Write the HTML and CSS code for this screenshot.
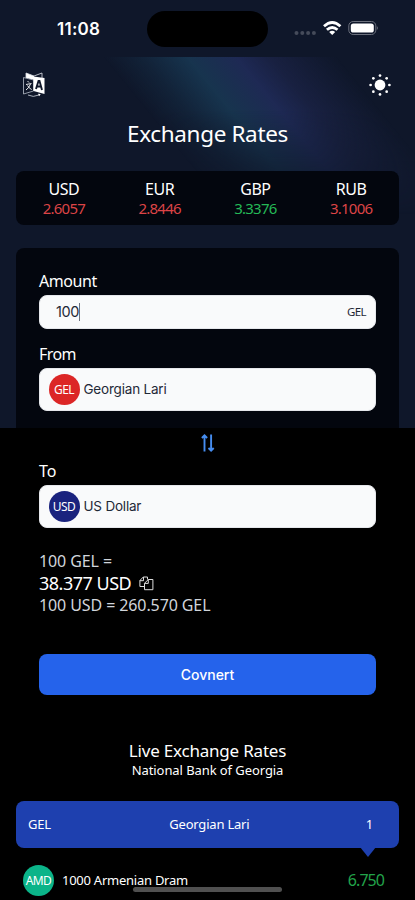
FILE: index.html
```html
<!DOCTYPE html>
<html lang="en">
<head>
<meta charset="utf-8">
<meta name="viewport" content="width=device-width, initial-scale=1">
<title>Exchange Rates</title>
<link rel="stylesheet" href="styles.css">
</head>
<body>
<div class="screen">
  <div class="glow"></div>
  <div class="statusbar">
    <div class="clock">11:08</div>
    <div class="island"></div>
    <div class="signals">
      <svg width="84" height="18" viewBox="0 0 84 18">
        <g fill="#454b5a"><circle cx="2.500" cy="13" r="2"/><circle cx="8.300" cy="13" r="2"/><circle cx="14.100" cy="13" r="2"/><circle cx="19.900" cy="13" r="2"/></g>
        <g fill="none" stroke="#fff" stroke-width="2.800"><path d="M30 6.300Q38.200 -1.300 46.400 6.300"/><path d="M32.900 9.800Q38.200 5.100 43.500 9.800"/></g>
        <path d="M35.200 12Q38.200 9.600 41.200 12L38.200 15Z" fill="#fff"/>
        <rect x="54.800" y="1.500" width="27" height="13" rx="4.300" fill="none" stroke="#6b707d"/>
        <rect x="56.800" y="3.500" width="23" height="9" rx="2.600" fill="#fff"/>
        <path d="M82.900 6Q84.600 8 82.900 10Z" fill="#777c88"/>
      </svg>
    </div>
  </div>
  <header class="toolbar">
    <svg class="translate" width="22" height="26" viewBox="0 0 22 26">
      <path d="M3 1L11 4V8L3 6Z" fill="#fff"/>
      <path d="M3 6V1L11 4L19 1V6" fill="none" stroke="#dfe3ea" stroke-width=".8"/>
      <path d="M.5 5.500L10.500 8V19L.5 22Z" fill="#0f172a" stroke="#b9bfca" stroke-width=".8"/>
      <path d="M10.500 4.500L21.500 6V22L10.500 19Z" fill="#fff"/>
      <path d="M4.500 9L6 10.500M3 12.500L8.500 11.500M7.500 12Q6 16 3 18M4.500 13.500Q6 16.500 8.700 17.500" fill="none" stroke="#fff" stroke-width=".9"/>
      <path d="M13 17L15.500 9H16.500L19 18M14 14.500H18" fill="none" stroke="#0f172a" stroke-width="1.900"/>
      <path d="M5 23Q10 25.800 16 23" fill="none" stroke="#b9bfca" stroke-width=".9"/><path d="M15 21.800L17.700 22L16.200 24.200Z" fill="#fff"/>
    </svg>
    <svg class="sun" width="24" height="24" viewBox="0 0 24 24" fill="#fff">
      <circle cx="12" cy="12" r="5.400"/><circle cx="12" cy="2.600" r="1.350"/><circle cx="12" cy="21.400" r="1.350"/><circle cx="2.600" cy="12" r="1.350"/><circle cx="21.400" cy="12" r="1.350"/><circle cx="5.350" cy="5.350" r="1.350"/><circle cx="18.650" cy="5.350" r="1.350"/><circle cx="5.350" cy="18.650" r="1.350"/><circle cx="18.650" cy="18.650" r="1.350"/>
    </svg>
  </header>
  <h1 class="title">Exchange Rates</h1>
  <section class="ticker">
    <div><div class="code">USD</div><div class="rate down">2.6057</div></div>
    <div><div class="code">EUR</div><div class="rate down">2.8446</div></div>
    <div><div class="code">GBP</div><div class="rate up">3.3376</div></div>
    <div><div class="code">RUB</div><div class="rate down">3.1006</div></div>
  </section>
  <main class="converter">
    <div class="label">Amount</div>
    <div class="field amount"><span class="value">100</span><i class="caret"></i><span class="unit">GEL</span></div>
    <div class="label second">From</div>
    <div class="field select"><span class="badge red">GEL</span><span class="name">Georgian Lari</span></div>
    <div class="swap">
      <svg width="14" height="18" viewBox="0 0 14 18" fill="none" stroke="#468df0" stroke-width="1.900"><path d="M3.500 17.500V2M.9 4L3.500 1.400L6.100 4M10.100 .5V16M7.500 14L10.100 16.600L12.700 14"/></svg>
    </div>
    <div class="label to">To</div>
    <div class="field select"><span class="badge navy">USD</span><span class="name">US Dollar</span></div>
    <div class="result">
      <div class="muted">100 GEL =</div>
      <div class="total"><span>38.377 USD</span>
        <svg width="15" height="15" viewBox="0 0 15 15" fill="none" stroke="#ddd" stroke-width="1"><path d="M5.500 10.500H.9V4.500L4.300 1H8.500V3.500M.9 4.700H4.500V1"/><path d="M9.300 3.500H13.900V13.700H5.500V7.300ZM5.500 7.400H9.300V3.500"/></svg>
      </div>
      <div class="muted">100 USD = 260.570 GEL</div>
    </div>
    <button class="convert">Covnert</button>
  </main>
  <section class="live">
    <h2>Live Exchange Rates</h2>
    <p>National Bank of Georgia</p>
    <div class="base"><span>GEL</span><span class="base-name">Georgian Lari</span><span>1</span></div>
    <div class="row"><span class="badge green">AMD</span><span class="row-name">1000 Armenian Dram</span><span class="row-rate">6.750</span></div>
  </section>
  <div class="home"></div>
</div>
</body>
</html>
```
FILE: styles.css
```css
* { box-sizing: border-box; }
body { margin: 0; background: #000; color: #fff; font-family: "Noto Sans", sans-serif; overflow: hidden; }
.screen { position: relative; width: 415px; height: 900px; overflow: hidden; background: linear-gradient(#0f172a 428px, #000 428px); }
.screen > * { position: relative; }
.screen .glow {
  position: absolute; top: 57px; left: 0; width: 415px; height: 175px;
  background: linear-gradient(51deg, rgba(23, 52, 78, 0) 44%, rgba(23, 52, 78, .4) 51%, #17344e 59%, #1a2f50 63%, #1e2954 68%, rgba(29, 37, 75, .7) 74%, rgba(28, 36, 72, 0) 86%);
  -webkit-mask-image: linear-gradient(#000 30%, rgba(0, 0, 0, .45) 62%, transparent 90%);
  mask-image: linear-gradient(#000 30%, rgba(0, 0, 0, .45) 62%, transparent 90%);
}
svg { display: block; }
.statusbar { height: 57px; padding: 11px 37px 0 57px; display: grid; grid-template-columns: 90px 121px 1fr; }
.clock { font: 600 17px/36px Inter, sans-serif; letter-spacing: .25px; }
.island { height: 36px; border-radius: 18px; background: #000; }
.signals { display: flex; justify-content: flex-end; padding-top: 9px; }
.toolbar { height: 60px; padding: 15px 23px 0; display: flex; justify-content: space-between; }
.sun { margin-top: 1px; }
.title { margin: 0; height: 54px; text-align: center; font-size: 22.5px; font-weight: 400; line-height: 33px; letter-spacing: -.35px; }
.ticker { margin: 0 16px; height: 54px; padding-top: 8px; border-radius: 8px; background: #03060e; display: grid; grid-template-columns: repeat(4, 1fr); text-align: center; }
.code { font-size: 16px; line-height: 20px; letter-spacing: -.5px; }
.rate { font-size: 15px; line-height: 18px; letter-spacing: -.75px; }
.down { color: #dc4446; }
.up { color: #25b957; }
.converter { margin: 23px 16px 0; height: 480px; padding: 22px 23px 0; border-radius: 8px; background: linear-gradient(#03060e 180px, #000 180px); }
.label { height: 25px; font-size: 16px; line-height: 23px; letter-spacing: -.45px; }
.to { letter-spacing: 0; }
.second { margin-top: 14px; letter-spacing: -.6px; }
.field { display: flex; align-items: center; background: #f9fafb; border: 1px solid #e5e7eb; border-radius: 8px; color: #1f2937; font-family: Inter, sans-serif; }
.amount { height: 34px; padding: 0 9px 1px 16px; }
.value { font-size: 14.5px; letter-spacing: -.4px; }
.caret { width: 1px; height: 18px; background: #6b7280; }
.unit { margin-left: auto; font: 11.5px "Noto Sans", sans-serif; letter-spacing: -.6px; }
.select { height: 43px; padding: 0 8.500px 1px; }
.badge { width: 31px; height: 31px; border-radius: 50%; display: grid; place-items: center; color: #fff; font: 12px "Noto Sans", sans-serif; letter-spacing: -.6px; }
.red { background: #dc2626; }
.navy { background: #1a237e; }
.green { background: #0bb489; }
.name { margin-left: 4px; font-size: 13.500px; letter-spacing: -.2px; }
.swap { height: 49px; padding-top: 23px; display: flex; justify-content: center; }
.result { height: 126px; padding-top: 22px; }
.muted { color: #d1d5db; font-size: 16px; line-height: 22px; letter-spacing: -.1px; }
.total { display: flex; align-items: center; gap: 8px; font-size: 18px; line-height: 22px; height: 22px; letter-spacing: -.5px; }
.convert { display: block; width: 100%; height: 40.500px; border: 0; border-radius: 8px; background: #2563eb; color: #fff; font: 500 14px Inter, sans-serif; }
.live { padding: 12px 16px 0; text-align: center; }
.live h2 { margin: 0; font-size: 17px; font-weight: 400; line-height: 22px; letter-spacing: -.2px; }
.live p { margin: 0; font-size: 13px; line-height: 17px; letter-spacing: -.08px; }
.base { position: relative; margin-top: 22px; height: 47px; padding: 0 26px 1px 12px; display: flex; align-items: center; justify-content: space-between; border-radius: 8px; background: #1e40af; font-size: 13px; letter-spacing: -.2px; }
.base-name { padding-left: 2px; }
.base::after { content: ""; position: absolute; right: 23px; top: 46px; border: 8px solid transparent; border-top: 10px solid #1e40af; border-bottom: 0; }
.row { height: 64px; padding: 0 15px 0 7px; display: flex; align-items: center; font-size: 13px; letter-spacing: -.25px; }
.row-name { margin-left: 8px; }
.row-rate { margin-left: auto; color: #22a34a; font-size: 16px; letter-spacing: -.95px; }
.screen .home { position: absolute; left: 133px; top: 887px; width: 149px; height: 5px; border-radius: 3px; background: #505050; }
```
